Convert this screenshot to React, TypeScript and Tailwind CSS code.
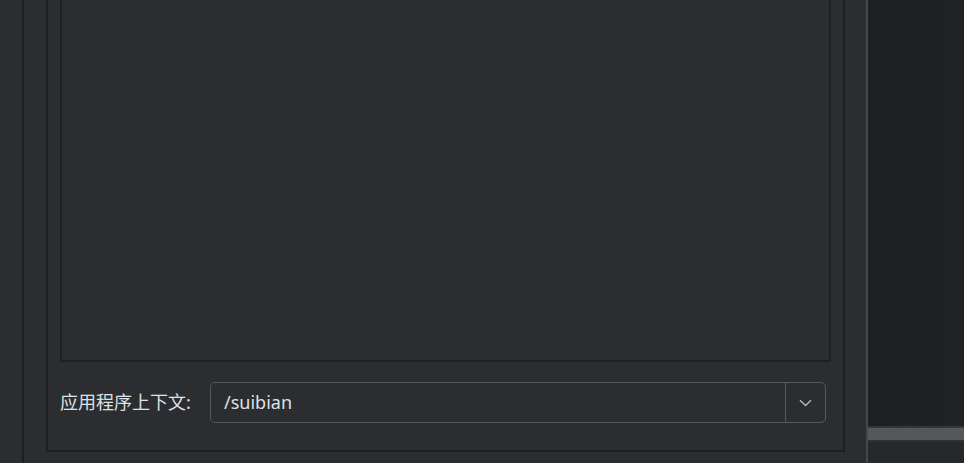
export default function App() {
  return (
    <div className="flex h-[463px] w-[964px] overflow-hidden bg-[#2b2d30]">
      {/* left edge strip */}
      <div className="w-[22px] shrink-0 bg-[#2b2d30]" />
      <div className="w-[2px] shrink-0 bg-[#1e1f22]" />

      {/* main dialog area */}
      <div className="flex w-[842px] shrink-0 flex-col bg-[#2b2d30] pb-[11px] pl-[22px] pr-[21px]">
        <div className="flex flex-1 flex-col border-x-2 border-b-2 border-[#1e1f22] px-[12px]">
          <div className="h-[362px] shrink-0 border-2 border-t-0 border-[#1f2023] bg-[#2b2d30]" />
          <div className="mt-[20px] flex h-[41px] items-center">
            <label className="w-[150px] shrink-0 text-[18px] text-[#dfe1e5] [font-family:'Noto_Sans','Noto_Sans_CJK_SC',sans-serif]">
              应用程序上下文:
            </label>
            <div className="flex h-[41px] w-[616px] items-stretch rounded-[5px] border border-[#55585d] bg-[#2b2d30]">
              <div className="flex flex-1 items-center pl-[13px] text-[18px] text-[#dfe1e5] [font-family:'Noto_Sans',sans-serif]">
                /suibian
              </div>
              <div className="flex w-[40px] items-center justify-center border-l border-[#55585d]">
                <svg width="13" height="8" viewBox="0 0 13 8" fill="none">
                  <path d="M1 1.2 L6.5 6.5 L12 1.2" stroke="#b4b8bf" strokeWidth="1.4" />
                </svg>
              </div>
            </div>
          </div>
        </div>
      </div>

      {/* splitter */}
      <div className="w-[2px] shrink-0 bg-[#45474b]" />

      {/* right side pane */}
      <div className="flex flex-1 flex-col">
        <div className="h-[426px] bg-[linear-gradient(90deg,#1e1f22_0%,#202124_40%,#1f2023_60%,#212225_100%)]" />
        <div className="h-[2px] bg-[#353739]" />
        <div className="h-[12px] bg-[#55575a]" />
        <div className="h-[2px] bg-[#2f3134]" />
        <div className="flex-1 bg-[#26282b]" />
      </div>
    </div>
  )
}
